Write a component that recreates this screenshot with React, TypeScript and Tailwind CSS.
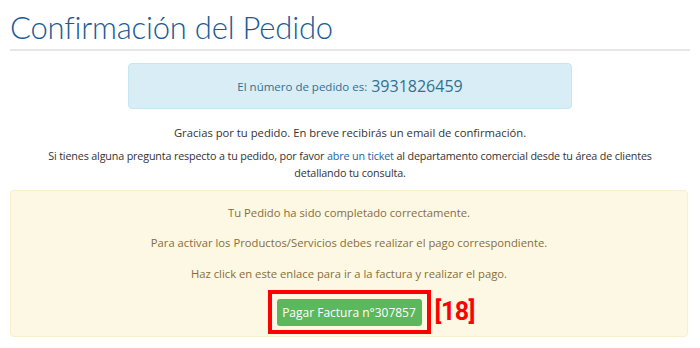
import React from "react";

export default function App() {
  return (
    <div className="w-[700px] h-[348px] overflow-hidden bg-white px-[10px] font-['Open_Sans','Liberation_Sans',sans-serif] text-[#333]">
      <h1 className="pt-[8px] h-[44px] text-[31px] leading-[38px] font-light text-[#1b5a97] font-['Lato','Open_Sans',sans-serif] tracking-[-0.2px]">
        Confirmación del Pedido
      </h1>
      <div className="mt-[5px] h-[2px] bg-[#e6e6e6]" />
      <div className="mx-auto mt-[12px] flex h-[46px] w-[444px] items-center justify-center rounded-[4px] border border-[#c6e6f2] bg-[#d9edf7] text-[#31708f]">
        <span className="text-[11.5px] mr-[4px] mt-[2px]">El número de pedido es:</span>
        <span className="text-[16px]">3931826459</span>
      </div>
      <p className="mt-[15px] text-center text-[11.25px] leading-[17px]">
        Gracias por tu pedido. En breve recibirás un email de confirmación.
      </p>
      <p className="mx-auto mt-[7px] w-[640px] text-center text-[10.75px] leading-[17px] tracking-[-0.15px]">
        Si tienes alguna pregunta respecto a tu pedido, por favor{" "}
        <a className="text-[#23659f]">abre un ticket</a> al departamento comercial desde tu área de clientes detallando tu consulta.
      </p>
      <div className="mt-[8px] h-[147px] w-[678px] rounded-[4px] border border-[#f8efcf] bg-[#fcf8e3] pt-[13px] text-center text-[11.25px] leading-[17px] text-[#8a6d3b]">
        <p>Tu Pedido ha sido completado correctamente.</p>
        <p className="mt-[13px]">Para activar los Productos/Servicios debes realizar el pago correspondiente.</p>
        <p className="mt-[14px]">Haz click en este enlace para ir a la factura y realizar el pago.</p>
        <div className="mt-[8px] flex justify-center">
          <div className="relative border-4 border-[#ff0000] px-[5px] pt-[5px] pb-[4px]">
            <div className="flex h-[27px] w-[145px] items-center justify-center rounded-[3px] bg-[#5cb85c] text-[12px] text-white">
              Pagar Factura n°307857
            </div>
            <span className="absolute left-[163px] top-[3px] text-[25px] leading-[30px] font-bold text-[#ff0000] font-['Liberation_Sans_Narrow','Roboto',sans-serif] tracking-[-0.5px]">
              [18]
            </span>
          </div>
        </div>
      </div>
    </div>
  );
}
